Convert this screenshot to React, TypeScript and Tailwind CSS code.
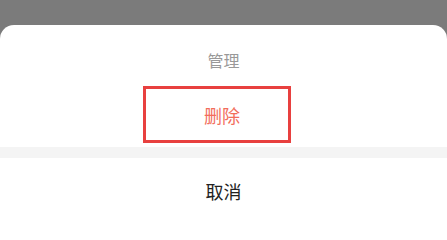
import React from "react";

export default function App() {
  const font = { fontFamily: '"Noto Sans CJK SC", "Noto Sans", sans-serif' };
  return (
    <div className="w-[447px] h-[219px] overflow-hidden bg-[#7b7b7b] flex flex-col" style={font}>
      <div className="h-[25px] shrink-0" />
      <div className="flex-1 bg-white rounded-t-[14px] flex flex-col">
        <div className="pt-[24px] h-[61px] text-center text-[16px] leading-[22px] text-[#999999]">管理</div>
        <div className="flex pl-[143px]">
          <div className="w-[148px] h-[57px] border-[3px] border-[#e8403f] pl-[10px] flex items-center justify-center text-[18px] leading-[24px] text-[#f26d5b]">
            删除
          </div>
        </div>
        <div className="h-[4px]" />
        <div className="h-[11px] bg-[#f4f4f4]" />
        <div className="pt-[21px] text-center text-[18px] leading-[24px] text-[#222222]">取消</div>
      </div>
    </div>
  );
}
